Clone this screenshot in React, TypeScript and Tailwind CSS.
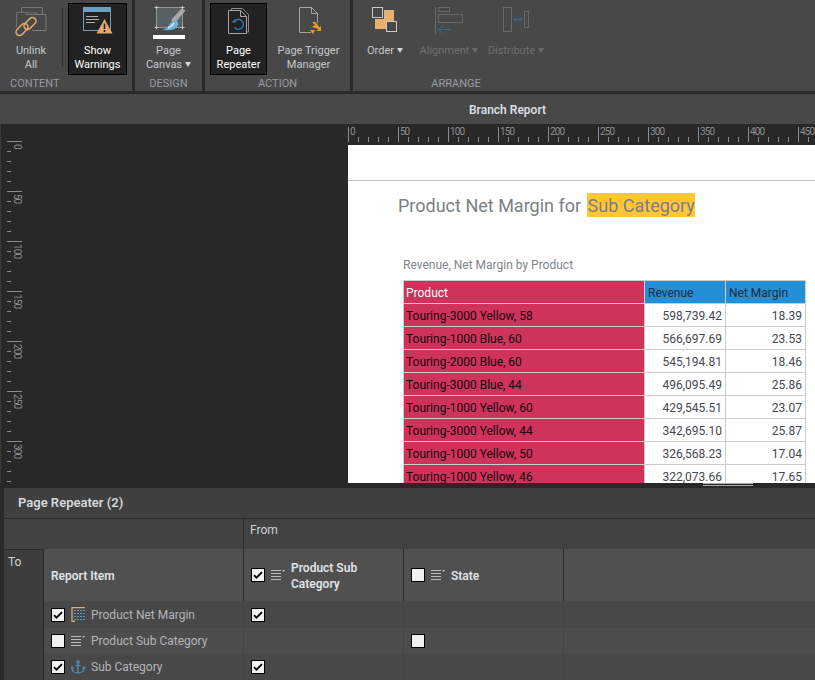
import type { ReactNode } from "react";

const rows = [
  ["Touring-3000 Yellow, 58", "598,739.42", "18.39"],
  ["Touring-1000 Blue, 60", "566,697.69", "23.53"],
  ["Touring-2000 Blue, 60", "545,194.81", "18.46"],
  ["Touring-3000 Blue, 44", "496,095.49", "25.86"],
  ["Touring-1000 Yellow, 60", "429,545.51", "23.07"],
  ["Touring-3000 Yellow, 44", "342,695.10", "25.87"],
  ["Touring-1000 Yellow, 50", "326,568.23", "17.04"],
  ["Touring-1000 Yellow, 46", "322,073.66", "17.65"],
];

function Caret({ dim }: { dim?: boolean }) {
  return (
    <svg width="6" height="5" viewBox="0 0 6 5" className="inline-block ml-[3px] mb-[1px]">
      <path d="M0 0h6L3 5z" fill={dim ? "#6b6b6b" : "#cfd6dc"} />
    </svg>
  );
}

function ToolButton({
  width,
  active,
  dim,
  icon,
  children,
}: {
  width: string;
  active?: boolean;
  dim?: boolean;
  icon: ReactNode;
  children: ReactNode;
}) {
  return (
    <div
      className={`${width} h-[72px] flex flex-col items-center text-center text-[11px] leading-[14px] shrink-0 whitespace-nowrap ${
        active ? "bg-[#222222] border border-black text-white" : dim ? "text-[#6f6f6f]" : "text-[#c4c8cc]"
      }`}
    >
      <div className={`${active ? "h-[40px]" : "h-[41px]"} w-full flex justify-center`}>{icon}</div>
      <div>{children}</div>
    </div>
  );
}

function Group({
  width,
  label,
  labelClass,
  children,
}: {
  width: string;
  label: string;
  labelClass: string;
  children: ReactNode;
}) {
  return (
    <div className={`${width} shrink-0 h-[91px] bg-[#484848] flex flex-col`}>
      <div className="flex pt-[3px] h-[75px]">{children}</div>
      <div className={`text-[11px] leading-[16px] pt-[1px] text-[#969ca1] ${labelClass}`}>{label}</div>
    </div>
  );
}

function UnlinkIcon() {
  return (
    <svg width="34" height="30" viewBox="0 0 34 30" className="mt-[4px]" fill="none">
      <path d="M7.500 5V0.500h21V7" stroke="#777" />
      <path d="M2.500 20V5.500h20V7" stroke="#6f6f6f" />
      <path d="M11 7.500h21v16H18" stroke="#7d7d7d" />
      <g stroke="#e0aa6e" strokeWidth="1.6">
        <rect x="1" y="19" width="14" height="7" rx="3.5" transform="rotate(-45 8 22.500)" />
        <rect x="9" y="13" width="14" height="7" rx="3.5" transform="rotate(-45 16 16.500)" />
      </g>
    </svg>
  );
}

function WarningIcon() {
  return (
    <svg width="31" height="27" viewBox="0 0 31 27" className="mt-[3px]" fill="none">
      <rect x="1.500" y="0.500" width="27" height="23" stroke="#6ba0c2" />
      <rect x="1" y="0" width="28" height="5" fill="#6ba0c2" />
      <path d="M4 9.500h12M4 12.500h13M4 15.500h9" stroke="#a8aeb4" />
      <path d="M22.500 12L30.500 26.500H14.500z" fill="#e6a868" />
      <path d="M22.500 16.500v5.500M22.500 23v2" stroke="#222" strokeWidth="1.6" />
    </svg>
  );
}

function CanvasIcon() {
  return (
    <svg width="34" height="34" viewBox="0 0 34 34" className="mt-[3px]" fill="none">
      <rect x="4.500" y="1.500" width="26" height="20" fill="#596063" stroke="#969696" />
      <path d="M2.500 1.500h4M4.500 0v3.500M28.500 1.500h4M30.500 0v3.500M2.500 21.500h4M4.500 19.500v4M28.500 21.500h4M30.500 19.500v4" stroke="#c4c4c4" />
      <path d="M19 14l11-12 3.500 2.500L23 17z" fill="#a8a8a8" />
      <path d="M10 23.500c4.500 0 6.500-3 8.500-6.500 2-3 6.500-3 7.500-.5 1 3-2 6-5 7-3 1-7.500 1-11 0z" fill="#6fb2dd" />
      <path d="M16 22c2.500-1 4.500-2.500 6-5" stroke="#ffffff" strokeWidth="1.3" />
      <rect x="1" y="29" width="32" height="4" fill="#ffffff" />
    </svg>
  );
}

function RepeaterIcon() {
  return (
    <svg width="21" height="26" viewBox="0 0 21 26" className="mt-[4px]" fill="none">
      <path d="M3.500 2V0.500h11l6 6V24h-2" stroke="#8a8a8a" />
      <path d="M0.500 2.500h12l6 6v17H0.500z" stroke="#a4a4a4" />
      <path d="M12.500 2.500v6h6" stroke="#a4a4a4" />
      <path d="M6 14a5 5 0 1 1 .5 5.500" stroke="#2f7fb5" strokeWidth="1.3" />
      <path d="M3.500 14.500h4.500l-1.500-3z" fill="#2f7fb5" />
    </svg>
  );
}

function TriggerIcon() {
  return (
    <svg width="24" height="28" viewBox="0 0 24 28" className="mt-[4px] ml-[2px]" fill="none">
      <path d="M13 25.500H1.500V0.500h12l6 6V16" stroke="#a4a4a4" />
      <path d="M13.500 0.500v6h6" stroke="#a4a4a4" />
      <path d="M14 15l3 3-3 2 6.500 2-2 2h4.500v-5l-1.500 1.500-4-5.500z" fill="#e89a27" />
      <path d="M12 23h5l-2 4z" fill="#e89a27" />
    </svg>
  );
}

function OrderIcon() {
  return (
    <svg width="26" height="26" viewBox="0 0 26 26" className="mt-[4px]" fill="none">
      <rect x="12" y="3" width="10" height="10" fill="#e6b06f" />
      <rect x="3" y="12" width="10" height="10" fill="#e6b06f" />
      <rect x="12" y="12" width="10" height="10" fill="#e6b06f" />
      <rect x="0.500" y="0.500" width="10" height="10" stroke="#c8c8c8" fill="#484848" />
      <rect x="14.500" y="14.500" width="10" height="10" stroke="#c8c8c8" fill="#484848" />
    </svg>
  );
}

function AlignIcon() {
  return (
    <svg width="28" height="28" viewBox="0 0 28 28" className="mt-[4px]" fill="none">
      <path d="M0.500 0v27" stroke="#6a6a6a" />
      <rect x="3.500" y="0.500" width="11" height="4" stroke="#6a6a6a" />
      <rect x="3.500" y="7.500" width="24" height="8" stroke="#6a6a6a" />
      <path d="M16 22.500H4M8 18.500l-4 4 4 4" stroke="#2f6c90" />
    </svg>
  );
}

function DistributeIcon() {
  return (
    <svg width="27" height="26" viewBox="0 0 27 26" className="mt-[4px]" fill="none">
      <rect x="0.500" y="0.500" width="8" height="24" stroke="#6a6a6a" />
      <rect x="21.500" y="4.500" width="4" height="16" stroke="#6a6a6a" />
      <path d="M11 12.500h8M13 10.500l-2 2 2 2M17 10.500l2 2-2 2" stroke="#2f6c90" />
    </svg>
  );
}

function TopRuler() {
  const ticks = Array.from({ length: 47 }, (_, i) => i);
  return (
    <svg width="467" height="21" className="block">
      {ticks.map((i) => {
        const major = i % 5 === 0;
        const x = i * 10 + 0.5;
        return <line key={i} x1={x} x2={x} y1={major ? 3 : 13} y2={18} stroke="#8c8c8c" />;
      })}
      {ticks
        .filter((i) => i % 5 === 0)
        .map((i) => (
          <text
            key={i}
            x={i * 10 + 2}
            y={11}
            fontSize="10"
            fill="#8e8e8e"
            fontFamily="Roboto, sans-serif"
            textLength={i === 0 ? 5 : i < 10 ? 10 : 15}
          >
            {i * 10}
          </text>
        ))}
    </svg>
  );
}

function LeftRuler() {
  const ticks = Array.from({ length: 35 }, (_, i) => i);
  return (
    <svg width="22" height="342" className="block">
      {ticks.map((i) => {
        const major = i % 5 === 0;
        const y = i * 10 + 0.5;
        return <line key={i} x1={6} x2={major ? 21 : 10} y1={y} y2={y} stroke="#8c8c8c" />;
      })}
      {ticks
        .filter((i) => i % 5 === 0)
        .map((i) => (
          <text
            key={i}
            fontSize="10"
            fill="#8e8e8e"
            fontFamily="Roboto, sans-serif"
            textLength={i === 0 ? 5 : i < 10 ? 10 : 15}
            transform={`translate(13 ${i * 10 + 3}) rotate(90)`}
          >
            {i * 10}
          </text>
        ))}
    </svg>
  );
}

function Check({ on }: { on?: boolean }) {
  return (
    <span className="w-[14px] h-[14px] border border-black bg-[#f0f0f0] flex items-center justify-center shrink-0">
      {on && (
        <svg width="10" height="8" viewBox="0 0 10 8" fill="none">
          <path d="M1 4.200l2.500 2.500L9 1.200" stroke="#000" strokeWidth="1.800" />
        </svg>
      )}
    </span>
  );
}

function FieldIcon() {
  return (
    <svg width="14" height="12" viewBox="0 0 14 12" className="shrink-0" fill="none">
      <path d="M0 1.500h10M0 4.500h10M0 7.500h10M0 10.500h10" stroke="#b8b8b8" />
      <path d="M11 1h3l-1.500 2z" fill="#b8b8b8" />
    </svg>
  );
}

function MetricIcon() {
  return (
    <svg width="14" height="15" viewBox="0 0 14 15" className="shrink-0" fill="none">
      <path d="M1 0v15M0.500 14.500H4M0.500 0.500H14" stroke="#e6a868" strokeWidth="1.300" />
      <g stroke="#4e9bd0" strokeDasharray="2 1">
        <path d="M3 3.500h11M3 6.500h11M3 9.500h11M3 12.500h11" />
      </g>
    </svg>
  );
}

function AnchorIcon() {
  return (
    <svg width="14" height="14" viewBox="0 0 14 14" className="shrink-0" fill="none" stroke="#4f94c4" strokeWidth="1.200">
      <circle cx="7" cy="2" r="1.200" />
      <path d="M7 3.200V13M4.500 5.500h5M1 8.500c0 3 3 4.500 6 4.500s6-1.500 6-4.500" />
      <path d="M0 9l1-2 1.500 2M11.500 9l1.500-2 1 2" />
    </svg>
  );
}

const itemRows = [
  { label: "Product Net Margin", on: true, icon: <MetricIcon />, a: true, b: null, cls: "h-[27px] bg-[#484848]" },
  { label: "Product Sub Category", on: false, icon: <FieldIcon />, a: null, b: false, cls: "h-[26px] bg-[#4d4d4d]" },
  { label: "Sub Category", on: true, icon: <AnchorIcon />, a: true, b: null, cls: "h-[26px] bg-[#484848]" },
];

export default function App() {
  return (
    <div className="w-[815px] h-[680px] overflow-hidden flex flex-col bg-[#2a2a2a] font-['Roboto',sans-serif]">
      {/* ribbon */}
      <div className="h-[91px] flex gap-[3px] bg-[#2a2a2a] shrink-0">
        <Group width="w-[132px]" label="CONTENT" labelClass="pl-[10px]">
          <ToolButton width="w-[62px]" icon={<UnlinkIcon />}>
            Unlink
            <br />
            All
          </ToolButton>
          <div className="w-px h-[59px] mt-[5px] bg-[#2e2e2e] mr-[5px]" />
          <ToolButton width="w-[59px]" active icon={<WarningIcon />}>
            Show
            <br />
            Warnings
          </ToolButton>
        </Group>
        <Group width="w-[67px]" label="DESIGN" labelClass="text-center">
          <ToolButton width="w-[67px]" icon={<CanvasIcon />}>
            Page
            <br />
            Canvas
            <Caret />
          </ToolButton>
        </Group>
        <Group width="w-[145px]" label="ACTION" labelClass="text-center">
          <div className="w-[5px]" />
          <ToolButton width="w-[57px]" active icon={<RepeaterIcon />}>
            Page
            <br />
            Repeater
          </ToolButton>
          <ToolButton width="w-[83px]" icon={<TriggerIcon />}>
            Page Trigger
            <br />
            Manager
          </ToolButton>
        </Group>
        <div className="flex-1 h-[91px] bg-[#484848]">
          <div className="w-[206px] flex flex-col">
            <div className="flex pt-[3px] h-[75px]">
              <ToolButton width="w-[64px]" icon={<OrderIcon />}>
                Order
                <Caret />
              </ToolButton>
              <ToolButton width="w-[64px]" dim icon={<AlignIcon />}>
                Alignment
                <Caret dim />
              </ToolButton>
              <ToolButton width="w-[70px]" dim icon={<DistributeIcon />}>
                Distribute
                <Caret dim />
              </ToolButton>
            </div>
            <div className="text-[11px] leading-[16px] pt-[1px] text-center text-[#969ca1]">ARRANGE</div>
          </div>
        </div>
      </div>

      {/* report title */}
      <div className="mt-[3px] h-[30px] shrink-0 bg-[#484848] flex items-center justify-center pl-[200px] pt-[2px] text-[12px] font-semibold text-[#d8dde2]">
        Branch Report
      </div>

      {/* canvas */}
      <div className="h-[359px] shrink-0 flex bg-[#282828] overflow-hidden">
        <div className="w-[348px] shrink-0 pt-[17px] border-l border-[#3a3a3a]">
          <LeftRuler />
        </div>
        <div className="flex-1 min-w-0 flex flex-col">
          <div className="h-[21px] shrink-0">
            <TopRuler />
          </div>
          <div className="flex-1 bg-white overflow-hidden">
            <div className="h-[36px] border-b border-[#c8c8c8]" />
            <div className="pl-[50px] mt-[12px] h-[24px] text-[18px] leading-[26px] text-[#7b7f85] whitespace-nowrap">
              Product Net Margin for <span className="bg-[#ffc733] inline-block h-[24px] ml-px pl-px">Sub Category</span>
            </div>
            <div className="pl-[55px] mt-[40px] text-[12px] leading-[16px] text-[#80848a]">
              Revenue, Net Margin by Product
            </div>
            <table className="ml-[55px] mt-[7px] w-[403px] table-fixed border-collapse text-[12px]">
              <thead>
                <tr className="h-[23px]">
                  <th className="w-[241px] border border-[#cccccc] bg-[#cf325a] text-white text-left font-normal pl-[2px] pt-[2px]">
                    Product
                  </th>
                  <th className="w-[81px] border border-[#cccccc] bg-[#238fd6] text-[#1d2c3c] text-left font-normal pl-[3px] pt-[2px]">
                    Revenue
                  </th>
                  <th className="w-[80px] border border-[#cccccc] bg-[#238fd6] text-[#1d2c3c] text-left font-normal pl-[3px] pt-[2px]">
                    Net Margin
                  </th>
                </tr>
              </thead>
              <tbody>
                {rows.map((r) => (
                  <tr key={r[0]} className="h-[23px]">
                    <td className="border border-[#cccccc] bg-[#cf325a] text-[#14060a] pl-[2px] pt-[2px]">{r[0]}</td>
                    <td className="border border-[#cccccc] text-[#444850] text-right pr-[3px] pt-[2px]">{r[1]}</td>
                    <td className="border border-[#cccccc] text-[#444850] text-right pr-[3px] pt-[2px]">{r[2]}</td>
                  </tr>
                ))}
              </tbody>
            </table>
          </div>
        </div>
      </div>

      {/* splitter */}
      <div className="h-[5px] shrink-0 bg-[#282828] flex justify-end pr-[62px]">
        <div className="w-[50px] h-[3px] border-y border-[#a8a8a8]" />
      </div>

      {/* page repeater panel */}
      <div className="flex-1 min-h-0 ml-[4px] flex flex-col bg-[#404040] text-[12px]">
        <div className="h-[31px] shrink-0 flex items-center pl-[14px] font-semibold text-[13px] text-[#d6d9dc] border-b border-[#2a2a2a]">
          Page Repeater (2)
        </div>
        <div className="h-[30px] shrink-0 flex bg-[#424242]">
          <div className="w-[240px] shrink-0 border-r border-[#2a2a2a]" />
          <div className="pl-[6px] pt-[2px] text-[#cfd2d5]">From</div>
        </div>
        <div className="flex-1 min-h-0 flex">
          <div className="w-[40px] shrink-0 bg-[#3d3d3d] border-r border-t border-[#2a2a2a] pl-[4px] pt-[3px] text-[#cfd2d5]">
            To
          </div>
          <div className="flex-1 min-w-0 flex flex-col">
            <div className="h-[52px] shrink-0 flex bg-[#505050] font-semibold text-[#e0e3e6]">
              <div className="w-[200px] shrink-0 flex items-center pl-[7px] pt-[2px] border-r border-[#2a2a2a]">
                Report Item
              </div>
              <div className="w-[160px] shrink-0 flex items-center pl-[7px] gap-[6px] border-r border-[#2a2a2a]">
                <Check on />
                <FieldIcon />
                <span className="leading-[16px] mt-[1px]">
                  Product Sub
                  <br />
                  Category
                </span>
              </div>
              <div className="w-[160px] shrink-0 flex items-center pl-[7px] gap-[6px] border-r border-[#2a2a2a]">
                <Check />
                <FieldIcon />
                <span className="mt-[1px]">State</span>
              </div>
            </div>
            {itemRows.map((row) => (
              <div key={row.label} className={`${row.cls} shrink-0 flex items-center text-[#b2b5b8]`}>
                <div className="w-[199px] shrink-0 h-full flex items-center pl-[7px] gap-[6px]">
                  <Check on={row.on} />
                  {row.icon}
                  <span>{row.label}</span>
                </div>
                <div className="w-[160px] shrink-0 h-full flex items-center pl-[7px] border-l border-[#444444]">
                  {row.a !== null && <Check on={row.a} />}
                </div>
                <div className="w-[160px] shrink-0 h-full flex items-center pl-[7px] border-l border-[#444444]">
                  {row.b !== null && <Check on={row.b} />}
                </div>
                <div className="flex-1 h-full border-l border-[#444444]" />
              </div>
            ))}
          </div>
        </div>
      </div>
    </div>
  );
}
